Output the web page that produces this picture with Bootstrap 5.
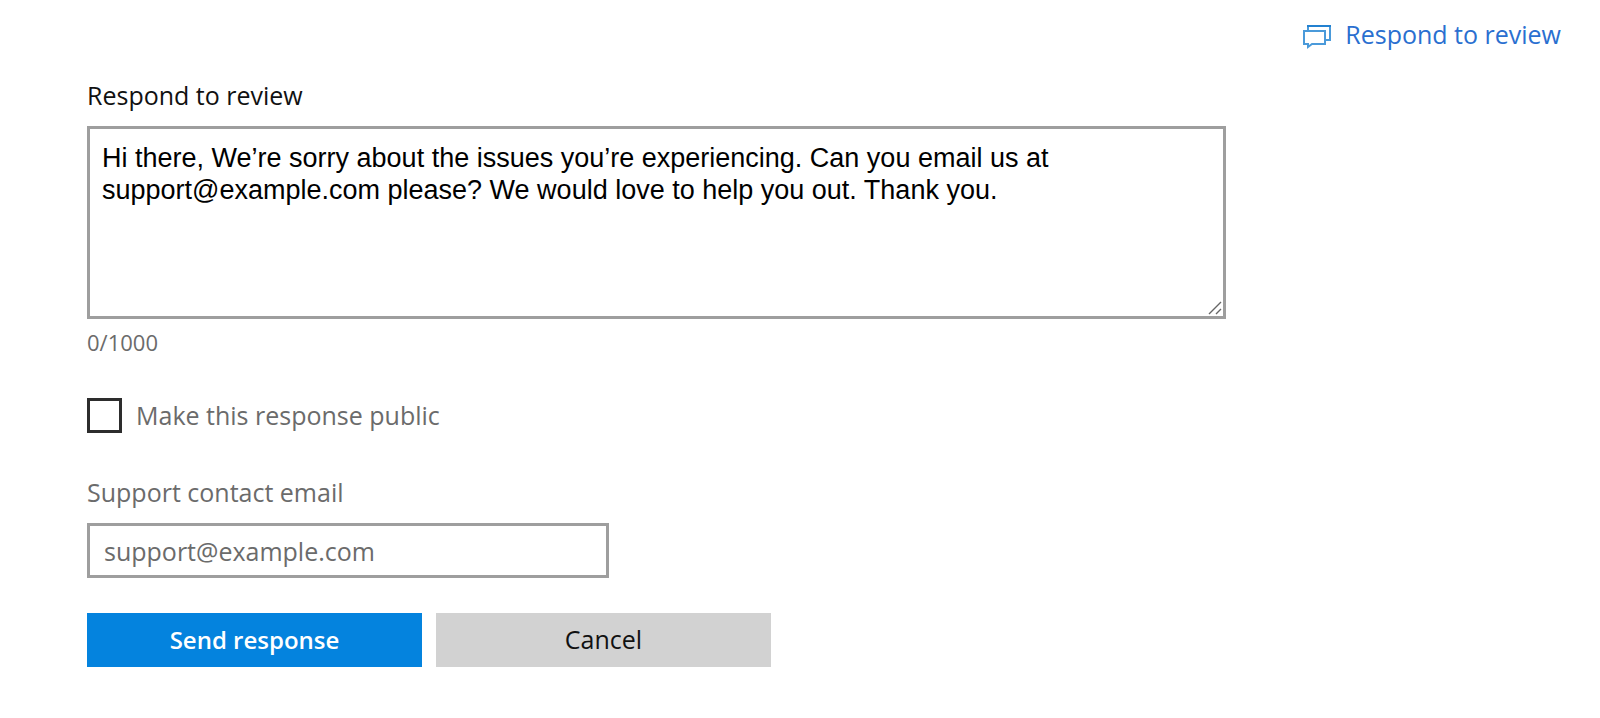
<!DOCTYPE html>
<html lang="en">
<head>
<meta charset="utf-8">
<meta name="viewport" content="width=device-width, initial-scale=1">
<title>Respond to review</title>
<link href="https://cdn.jsdelivr.net/npm/bootstrap@5.3.0/dist/css/bootstrap.min.css" rel="stylesheet">
<style>
  body { font-family: "Open Sans", "Noto Sans", sans-serif; font-size: 25px; line-height: 34px; color: #111; background: #fff; }
  .page-top { padding: 17px 39px 0 24px; }
  .respond-link { color: #2a6fd0; gap: 14px; }
  .respond-link svg { margin-top: 4px; }
  .review-form { padding: 27px 24px 50px 87px; }
  .reply-area { max-width: 1139px; }
  .form-label { margin-bottom: 14px; }
  .soft-text { color: #6b6b6b; }
  .form-control, .form-control:focus { border: 3px solid #9e9e9e; border-radius: 0; box-shadow: none; }
  textarea.form-control { height: 193px; padding: 13px 12px; font: 27px/32px "Liberation Sans", Arial, sans-serif; color: #000; overflow: hidden; }
  textarea.form-control::-webkit-resizer {
    background: url("data:image/svg+xml,%3Csvg xmlns='http://www.w3.org/2000/svg' width='15' height='15'%3E%3Cpath d='M1 13 13 1M8 13l5-5' stroke='%23666' stroke-width='1.4' fill='none'/%3E%3C/svg%3E") no-repeat right bottom;
  }
  .char-count { font-size: 22px; line-height: 30px; margin-top: 8px; }
  .public-choice { gap: 14px; margin-top: 41px; }
  .public-choice .form-check-input { width: 35px; height: 35px; border: 3px solid #2d2d2d; border-radius: 0; }
  .public-choice label { margin-top: -2px; }
  .email-group { max-width: 522px; margin-top: 42px; }
  .email-group .form-control { height: 55px; padding: 0 14px; font-size: 25px; color: #6b6b6b; }
  .form-actions { gap: 14px; margin-top: 35px; }
  .form-actions .btn { width: 335px; height: 54px; padding: 0; border: 0; border-radius: 0; font-size: 25px; }
  .form-actions .btn-send { background: #0483de; color: #fff; font-weight: 600; font-size: 24px; }
  .btn-cancel { background: #d2d2d2; color: #111; }
</style>
</head>
<body>
<header class="page-top d-flex justify-content-end">
  <a href="#reply" class="respond-link d-inline-flex align-items-center text-decoration-none">
    <svg width="28" height="26" viewBox="0 0 28 26" fill="none" stroke-width="2" aria-hidden="true">
      <path d="M5 8V3h22v14h-5" stroke="#4a9ada"/>
      <path d="M1 8h21v13H9l-4 3v-3H1z" stroke="#4a9ada"/>
      <path d="M4 3h24" stroke="#2381d0"/>
    </svg>
    <span>Respond to review</span>
  </a>
</header>
<main>
  <form class="review-form">
    <div class="reply-area">
      <label for="reply" class="form-label d-block">Respond to review</label>
      <textarea id="reply" class="form-control" spellcheck="false">Hi there, We’re sorry about the issues you’re experiencing. Can you email us at support@example.com please? We would love to help you out. Thank you.</textarea>
      <div class="char-count soft-text">0/1000</div>
    </div>
    <div class="public-choice d-flex align-items-center">
      <input type="checkbox" id="public" class="form-check-input flex-shrink-0 m-0">
      <label for="public" class="soft-text">Make this response public</label>
    </div>
    <div class="email-group">
      <label for="email" class="form-label d-block soft-text">Support contact email</label>
      <input type="email" id="email" class="form-control" value="support@example.com">
    </div>
    <div class="form-actions d-flex flex-wrap">
      <button type="button" class="btn btn-send">Send response</button>
      <button type="button" class="btn btn-cancel">Cancel</button>
    </div>
  </form>
</main>
<script src="https://cdn.jsdelivr.net/npm/bootstrap@5.3.0/dist/js/bootstrap.bundle.min.js"></script>
</body>
</html>
